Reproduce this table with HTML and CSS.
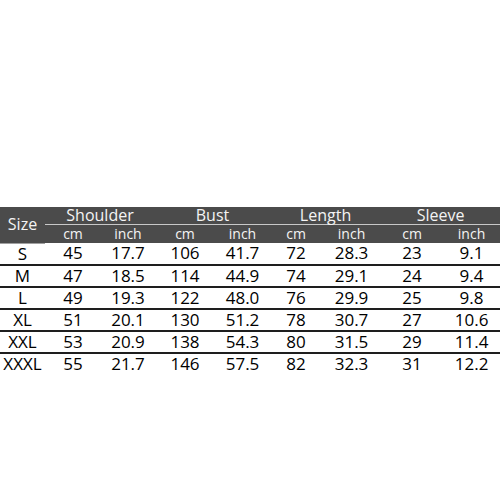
FILE: index.html
```html
<!DOCTYPE html>
<html lang="en">
<head>
  <meta charset="UTF-8">
  <title>Size Chart</title>
  <link rel="stylesheet" href="styles.css">
</head>
<body>
  <table class="chart">
    <colgroup>
      <col class="c-size">
      <col class="c1"><col class="c2">
      <col class="c3"><col class="c4">
      <col class="c5"><col class="c6">
      <col class="c7"><col class="c8">
    </colgroup>
    <thead>
      <tr class="head-top">
        <th rowspan="2" class="size-head">Size</th>
        <th colspan="2">Shoulder</th>
        <th colspan="2">Bust</th>
        <th colspan="2">Length</th>
        <th colspan="2">Sleeve</th>
      </tr>
      <tr class="head-sub">
        <th>cm</th><th>inch</th>
        <th>cm</th><th>inch</th>
        <th>cm</th><th>inch</th>
        <th>cm</th><th>inch</th>
      </tr>
    </thead>
    <tbody>
      <tr><td>S</td><td>45</td><td>17.7</td><td>106</td><td>41.7</td><td>72</td><td>28.3</td><td>23</td><td>9.1</td></tr>
      <tr><td>M</td><td>47</td><td>18.5</td><td>114</td><td>44.9</td><td>74</td><td>29.1</td><td>24</td><td>9.4</td></tr>
      <tr><td>L</td><td>49</td><td>19.3</td><td>122</td><td>48.0</td><td>76</td><td>29.9</td><td>25</td><td>9.8</td></tr>
      <tr><td>XL</td><td>51</td><td>20.1</td><td>130</td><td>51.2</td><td>78</td><td>30.7</td><td>27</td><td>10.6</td></tr>
      <tr><td>XXL</td><td>53</td><td>20.9</td><td>138</td><td>54.3</td><td>80</td><td>31.5</td><td>29</td><td>11.4</td></tr>
      <tr><td>XXXL</td><td>55</td><td>21.7</td><td>146</td><td>57.5</td><td>82</td><td>32.3</td><td>31</td><td>12.2</td></tr>
    </tbody>
  </table>
</body>
</html>
```

FILE: styles.css
```css
body {
  margin: 0;
  padding-top: 207px;
  background: #fff;
  font-family: 'Open Sans', sans-serif;
  color: #000;
}

.chart {
  width: 500px;
  table-layout: fixed;
  border-collapse: collapse;
}

.c-size { width: 45px; }
.c1 { width: 56px; }
.c2 { width: 54px; }
.c3 { width: 60px; }
.c4 { width: 55px; }
.c5 { width: 52px; }
.c6 { width: 59px; }
.c7 { width: 62px; }
.c8 { width: 57px; }

th, td {
  padding: 0;
  text-align: center;
  white-space: nowrap;
}

thead th {
  background: #4b4b4b;
  color: #f4f4f4;
  font-weight: normal;
}

.head-top th {
  height: 17px;
  font-size: 16px;
  line-height: 17px;
  vertical-align: top;
  border-bottom: 1px solid #c8c8c8;
}

.head-top .size-head {
  vertical-align: middle;
  border-bottom: 1px solid #a0a0a0;
}

.head-sub th {
  height: 18px;
  font-size: 14px;
  line-height: 18px;
}

tbody td {
  height: 20px;
  font-size: 17px;
  line-height: 20px;
}

tbody tr + tr td {
  border-top: 2px solid #1e1e1e;
}
```
